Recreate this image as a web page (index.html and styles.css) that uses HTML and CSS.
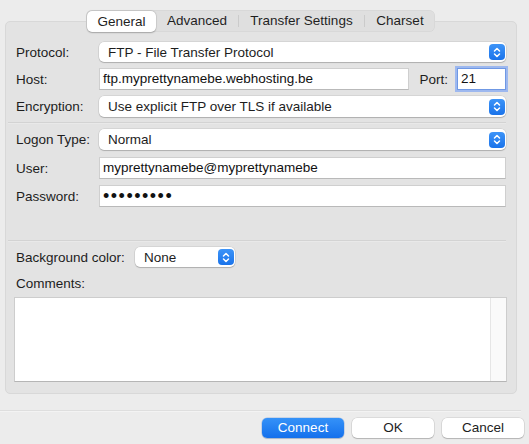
FILE: index.html
```html
<!DOCTYPE html>
<html>
<head>
<meta charset="utf-8">
<link rel="stylesheet" href="styles.css">
</head>
<body>
<div class="window">
  <div class="tabs-wrap">
    <div class="tabs">
      <div class="tab tab-general selected">General</div>
      <div class="tab tab-advanced">Advanced</div>
      <div class="sep-v"></div>
      <div class="tab tab-transfer">Transfer Settings</div>
      <div class="sep-v"></div>
      <div class="tab tab-charset">Charset</div>
    </div>
  </div>
  <div class="group">
    <div class="row row-popup">
      <div class="label">Protocol:</div>
      <div class="popup wide"><span class="popup-text">FTP - File Transfer Protocol</span><span class="arrow"><svg width="8" height="11" viewBox="0 0 8 11"><path d="M1.5 4 L4 1.5 L6.5 4 M1.5 7 L4 9.5 L6.5 7" fill="none" stroke="#fff" stroke-width="1.5" stroke-linecap="round" stroke-linejoin="round"/></svg></span></div>
    </div>
    <div class="row row-input">
      <div class="label">Host:</div>
      <div class="host-line">
        <div class="input host">ftp.myprettynamebe.webhosting.be</div>
        <div class="port-label">Port:</div>
        <div class="input port">21</div>
      </div>
    </div>
    <div class="row row-popup2">
      <div class="label">Encryption:</div>
      <div class="popup wide"><span class="popup-text">Use explicit FTP over TLS if available</span><span class="arrow"><svg width="8" height="11" viewBox="0 0 8 11"><path d="M1.5 4 L4 1.5 L6.5 4 M1.5 7 L4 9.5 L6.5 7" fill="none" stroke="#fff" stroke-width="1.5" stroke-linecap="round" stroke-linejoin="round"/></svg></span></div>
    </div>
    <div class="hsep sep1"></div>
    <div class="row row-popup2 logon">
      <div class="label">Logon Type:</div>
      <div class="popup wide"><span class="popup-text">Normal</span><span class="arrow"><svg width="8" height="11" viewBox="0 0 8 11"><path d="M1.5 4 L4 1.5 L6.5 4 M1.5 7 L4 9.5 L6.5 7" fill="none" stroke="#fff" stroke-width="1.5" stroke-linecap="round" stroke-linejoin="round"/></svg></span></div>
    </div>
    <div class="row row-input user">
      <div class="label">User:</div>
      <div class="input">myprettynamebe@myprettynamebe</div>
    </div>
    <div class="row row-input">
      <div class="label">Password:</div>
      <div class="input"><span class="dots">•••••••••</span></div>
    </div>
    <div class="hsep sep2"></div>
    <div class="bg-row">
      <div class="label bg-label">Background color:</div>
      <div class="popup small"><span class="popup-text">None</span><span class="arrow"><svg width="8" height="11" viewBox="0 0 8 11"><path d="M1.5 4 L4 1.5 L6.5 4 M1.5 7 L4 9.5 L6.5 7" fill="none" stroke="#fff" stroke-width="1.5" stroke-linecap="round" stroke-linejoin="round"/></svg></span></div>
    </div>
    <div class="comments-label">Comments:</div>
    <div class="textarea"><div class="scroll"></div></div>
  </div>
  <div class="bottom-sep"></div>
  <div class="buttons">
    <div class="btn primary">Connect</div>
    <div class="btn">OK</div>
    <div class="btn">Cancel</div>
  </div>
</div>
</body>
</html>
```
FILE: styles.css
```css
html, body {
  margin: 0;
  padding: 0;
}
body {
  background: #ececec;
  font-family: "Liberation Sans", Arial, sans-serif;
  font-size: 13.5px;
  color: #1d1d1d;
}
.window {
  width: 529px;
  height: 444px;
  padding-top: 10px;
  box-sizing: border-box;
  overflow: hidden;
}
.tabs-wrap {
  width: 512px;
  margin-left: 5px;
  display: flex;
  justify-content: center;
  margin-bottom: -11px;
  position: relative;
  z-index: 1;
}
.tabs {
  display: flex;
  align-items: center;
  height: 22px;
  background: #dfdfdf;
  border-radius: 6px;
  box-shadow: inset 0 0 0 0.5px rgba(0,0,0,0.06);
  margin-left: -1px;
}
.tab {
  height: 22px;
  line-height: 22px;
  text-align: center;
  color: #1f1f1f;
}
.tab.selected {
  background: #fff;
  border-radius: 5px;
  height: 21px;
  line-height: 21px;
  margin-left: 1px;
  box-shadow: 0 0.5px 1.5px rgba(0,0,0,0.25), 0 0 0 0.5px rgba(0,0,0,0.08);
}
.tab-general { width: 69px; }
.tab-advanced { width: 82px; }
.tab-transfer { width: 125px; }
.tab-charset { width: 70px; }
.sep-v {
  width: 1px;
  height: 12px;
  background: #cbcbcb;
}
.group {
  width: 512px;
  height: 373px;
  margin-left: 5px;
  box-sizing: border-box;
  background: #e3e3e3;
  border: 1px solid #d8d8d8;
  border-radius: 5px;
  padding: 20px 10px 0 10px;
}
.row {
  display: flex;
  align-items: center;
}
.label {
  width: 83px;
  flex: none;
  color: #1d1d1d;
}
.row-popup { height: 20px; margin-bottom: 6px; }
.row-input { height: 22px; margin-bottom: 6px; }
.row-popup2 { height: 21px; }
.logon { margin-bottom: 7px; }
.user { margin-bottom: 6px; }
.popup {
  height: 20px;
  background: #fff;
  border-radius: 5px;
  box-shadow: 0 0 0 0.5px rgba(0,0,0,0.12), 0 1px 1px rgba(0,0,0,0.18);
  display: flex;
  align-items: center;
  justify-content: space-between;
  box-sizing: border-box;
  padding: 0 1px 0 9px;
}
.row-popup2 .popup { height: 21px; }
.popup.wide { flex: 1; }
.popup.small { width: 100px; }
.popup-text { color: #1d1d1d; }
.arrow {
  width: 16px;
  height: 16px;
  border-radius: 4px;
  background: linear-gradient(#3d94f8, #1a73ea);
  display: flex;
  align-items: center;
  justify-content: center;
}
.input {
  flex: 1;
  height: 22px;
  box-sizing: border-box;
  background: #fff;
  border: 1px solid #cfcfcf;
  border-bottom-color: #b9b9b9;
  padding: 0 3px;
  line-height: 20px;
  color: #111;
  white-space: nowrap;
  overflow: hidden;
}
.host-line {
  flex: 1;
  display: flex;
  align-items: center;
}
.input.host { flex: 1; }
.port-label {
  margin-left: 10px;
  margin-right: 9px;
}
.input.port {
  flex: none;
  width: 49px;
  border: 1px solid #6f98e4;
  box-shadow: 0 0 0 2px #9db8ef;
  padding-left: 3px;
}
.dots {
  font-size: 18px;
  letter-spacing: 1.5px;
  line-height: 20px;
}
.hsep {
  height: 1px;
  background: #d3d3d3;
  border-bottom: 1px solid #e9e9e9;
  margin-left: -8px;
}
.sep1 { margin-top: 5px; margin-bottom: 5px; }
.sep2 { margin-top: 33px; margin-bottom: 5px; }
.bg-row {
  display: flex;
  align-items: center;
  height: 20px;
}
.bg-label { width: 119px; }
.comments-label {
  margin-top: 9px;
  height: 16px;
  line-height: 16px;
}
.textarea {
  margin-top: 5px;
  margin-left: -2px;
  margin-right: -1px;
  height: 85px;
  box-sizing: border-box;
  background: #fff;
  border: 1px solid #cdcdcd;
  border-bottom-color: #b5b5b5;
  display: flex;
  justify-content: flex-end;
}
.scroll {
  width: 15px;
  background: #fafafa;
  border-left: 1px solid #e6e6e6;
}
.bottom-sep {
  margin-top: 16px;
  width: 521px;
  height: 1px;
  background: #dedede;
  border-bottom: 1px solid #f3f3f3;
}
.buttons {
  margin-top: 6px;
  display: flex;
  justify-content: flex-end;
  gap: 8px;
  padding-right: 5px;
}
.btn {
  width: 82px;
  height: 20px;
  line-height: 20px;
  text-align: center;
  background: #fff;
  border-radius: 5px;
  box-shadow: 0 0 0 0.5px rgba(0,0,0,0.14), 0 1px 1px rgba(0,0,0,0.18);
  color: #1d1d1d;
}
.btn.primary {
  background: linear-gradient(#3592f8, #1470ec);
  color: #fff;
  box-shadow: 0 0 0 0.5px rgba(0,80,200,0.3), 0 1px 1px rgba(0,0,0,0.15);
}
```
